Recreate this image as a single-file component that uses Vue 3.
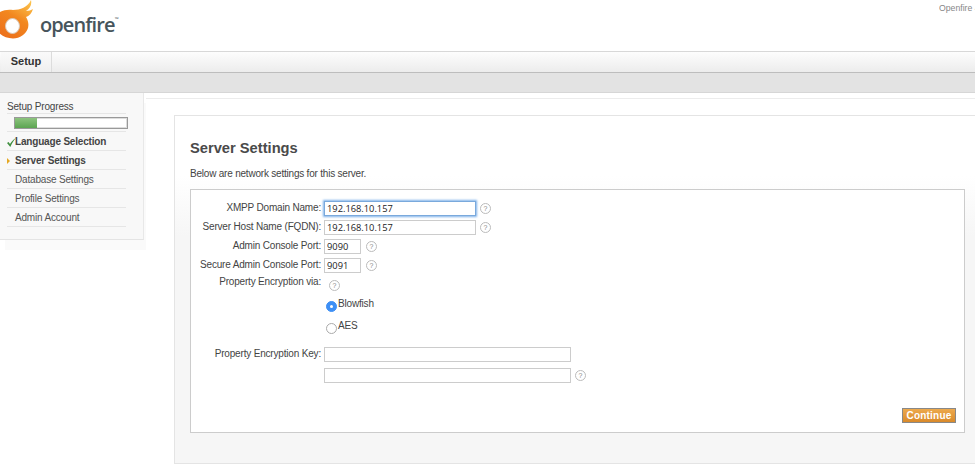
<template>
  <div class="page">
    <header class="top">
      <div class="logo">
        <svg class="mark" width="36" height="40" viewBox="0 0 36 40" aria-hidden="true">
          <defs>
            <linearGradient id="fl" x1="0.2" y1="1" x2="0.8" y2="0">
              <stop offset="0" stop-color="#ec6f1c" />
              <stop offset="0.55" stop-color="#f2871f" />
              <stop offset="1" stop-color="#fbc04a" />
            </linearGradient>
          </defs>
          <path fill="url(#fl)" d="M-3 14C2 10 8 9 13 10 20 10 28 7 31 0c1 5-1 8-5 11 3 0 5-1 7-2-1 4-4 7-7 8 2 3 3 7 2 11-2 6-8 10.500-15 10.500-8 0-15-4.500-17-10.500z" />
          <ellipse cx="12.500" cy="26" rx="7" ry="7.500" fill="#fff" stroke="#d9c8b8" stroke-width="1" />
        </svg>
        <span class="word">openfire<sup>™</sup></span>
      </div>
      <span class="brand-note">Openfire 4</span>
    </header>

    <nav class="tabs"><div class="tab">Setup</div></nav>
    <div class="subnav"></div>

    <div class="body">
      <aside class="side">
        <div class="side-title">Setup Progress</div>
        <div class="progress-row"><div class="progress"><div class="fill" :style="{ width: progress + '%' }"></div></div></div>
        <ul class="steps">
          <li v-for="s in steps" :key="s.label" :class="['step', s.state]">
            <svg v-if="s.state === 'done'" class="check" width="9" height="9" viewBox="0 0 9 9" aria-hidden="true"><path d="M0 5 1.600 4 3 6C4.500 3.500 6.300 1.500 8.800 0 6.600 2.500 4.800 5.500 3.300 9z" fill="#3f8f3f" /></svg>
            <span v-if="s.state === 'current'" class="arrow"></span>
            {{ s.label }}
          </li>
        </ul>
      </aside>

      <main class="main">
        <section class="panel">
          <h1>Server Settings</h1>
          <p class="intro">Below are network settings for this server.</p>
          <div class="card">
            <div class="form">
              <div v-for="f in fields" :key="f.label" class="row">
                <label>{{ f.label }}</label>
                <input :class="[f.size, { focus: f.focus }]" :value="f.value" readonly />
                <span class="help">?</span>
              </div>

              <div class="row enc">
                <label>Property Encryption via:</label>
                <span class="help">?</span>
              </div>
              <div class="radio-row first"><span class="radio on"></span><span class="radio-text">Blowfish</span></div>
              <div class="radio-row"><span class="radio"></span><span class="radio-text">AES</span></div>

              <div class="row key">
                <label>Property Encryption Key:</label>
                <input class="long" readonly />
              </div>
              <div class="row key2">
                <label></label>
                <input class="long" readonly />
                <span class="help">?</span>
              </div>
            </div>
            <div class="actions"><button class="continue">Continue</button></div>
          </div>
        </section>
      </main>
    </div>
  </div>
</template>

<script setup>
const progress = 20
const steps = [
  { label: 'Language Selection', state: 'done' },
  { label: 'Server Settings', state: 'current' },
  { label: 'Database Settings', state: '' },
  { label: 'Profile Settings', state: '' },
  { label: 'Admin Account', state: '' }
]
const fields = [
  { label: 'XMPP Domain Name:', value: '192.168.10.157', size: 'mid', focus: true },
  { label: 'Server Host Name (FQDN):', value: '192.168.10.157', size: 'mid' },
  { label: 'Admin Console Port:', value: '9090', size: 'port' },
  { label: 'Secure Admin Console Port:', value: '9091', size: 'port' }
]
</script>

<style>
html, body { margin: 0; background: #fff; overflow: hidden; }
</style>

<style scoped>
.page { width: 975px; height: 469px; overflow: hidden; font-family: "Liberation Sans", Arial, sans-serif; font-size: 10px; letter-spacing: -.18px; color: #444; }
.top { height: 51px; display: flex; justify-content: space-between; align-items: flex-start; }
.logo { display: flex; align-items: flex-start; }
.mark { display: block; }
.word { font-family: "Open Sans", sans-serif; font-weight: 600; font-size: 20px; line-height: 34px; margin: 8px 0 0 4px; color: #47555c; letter-spacing: -.9px; }
.word sup { font-size: 5px; vertical-align: 11px; line-height: 0; }
.brand-note { font-size: 8.700px; letter-spacing: 0; color: #888; margin-top: 3px; white-space: nowrap; width: 36px; overflow: hidden; }
.tabs { height: 20px; border-top: 1px solid #d8d8d8; border-bottom: 1px solid #bdbdbd; background: linear-gradient(#fdfdfd, #ececec); display: flex; padding-left: 1px; }
.tab { width: 51px; box-sizing: border-box; border-right: 1px solid #dcdcdc; text-align: center; font-weight: bold; font-size: 11px; letter-spacing: 0; color: #333; line-height: 19px; background: linear-gradient(#fafafa, #efefef); }
.subnav { height: 19px; background: #e3e3e3; border-bottom: 1px solid #d6d6d6; }
.body { display: flex; align-items: flex-start; }
.side { width: 144px; height: 147px; box-sizing: border-box; padding: 8px 17px 0 7px; background: #f8f8f8; border-bottom: 1px solid #e4e4e4; border-right: 1px solid #e8e8e8; box-shadow: 5px 10px 0 #fafafa; flex: none; }
.side-title { line-height: 12px; border-bottom: 1px solid #e6e6e6; color: #444; }
.progress-row { height: 18px; box-sizing: border-box; border-bottom: 1px solid #e6e6e6; padding: 3px 0 0 7px; }
.progress { width: 114px; height: 12px; box-sizing: border-box; border: 1px solid #999; background: #fff; box-shadow: inset 0 0 0 1px #ddd; }
.fill { height: 100%; background: linear-gradient(#8dc47f, #5ca552); }
.steps { list-style: none; margin: 0; padding: 0; }
.step { height: 19px; line-height: 20px; box-sizing: border-box; border-bottom: 1px solid #e6e6e6; padding-left: 8px; position: relative; color: #555; }
.step.done, .step.current { font-weight: bold; color: #444; }
.check { position: absolute; left: 0; top: 6px; }
.arrow { position: absolute; left: 0; top: 7px; border-left: 3px solid #e5a823; border-top: 3px solid transparent; border-bottom: 3px solid transparent; }
.main { flex: 1; margin-left: 2px; margin-top: 5px; position: relative; background: #fff; border-top: 1px solid #ececec; padding: 16px 0 0 28px; }
.panel { border: 1px solid #e4e4e4; border-right: 0; height: 349px; box-sizing: border-box; padding: 23px 10px 0 15px; background: linear-gradient(#fff 0, #fff 60px, #f6f6f6 120px); }
h1 { margin: 0; font-size: 14.700px; letter-spacing: 0; line-height: 18px; font-weight: bold; color: #4a4a4a; }
.intro { margin: 10px 0 0; line-height: 13px; letter-spacing: -.21px; color: #444; }
.card { margin-top: 9px; height: 244px; box-sizing: border-box; background: #fff; border: 1px solid #ccc; position: relative; padding-top: 9px; }
.row { display: flex; align-items: center; height: 19px; }
label { width: 130px; text-align: right; margin: 0 3px 3px 0; white-space: nowrap; flex: none; color: #444; }
input { box-sizing: border-box; height: 15px; border: 1px solid #ccc; background: #fff; padding: 0 2px; font: 9.300px "Open Sans", sans-serif; letter-spacing: 0; color: #222; outline: 0; margin: 0; }
input.mid { width: 152px; }
input.port { width: 37px; }
input.long { width: 247px; }
input.focus { border-color: #7aa9dc; box-shadow: 0 0 2px 1px #7fb2ea; }
.help { width: 11px; height: 11px; border: 1px solid #bbb; border-radius: 50%; box-sizing: border-box; margin-left: 4px; font-size: 7px; letter-spacing: 0; line-height: 9px; text-align: center; color: #888; flex: none; }
.row .port + .help { margin-left: 5px; }
.enc label { margin-bottom: 7px; }
.enc .help { margin: 1px 0 0 5px; }
.radio-row { display: flex; align-items: flex-start; margin-left: 135px; height: 22px; }
.radio-row.first { margin-top: 4px; }
.radio { width: 11px; height: 11px; margin-top: 3px; border-radius: 50%; box-sizing: border-box; border: 1px solid #aaa; background: #fff; position: relative; flex: none; }
.radio.on { background: #3d8ff5; border-color: #3d8ff5; }
.radio.on::after { content: ""; position: absolute; left: 3px; top: 3px; width: 3px; height: 3px; border-radius: 50%; background: #fff; }
.radio-text { margin-left: 1px; }
.key { margin-top: 3px; }
.key2 { margin-top: 2px; }
.actions { position: absolute; right: 8px; bottom: 9px; }
.continue { display: block; width: 54px; height: 15px; padding: 0; border: 1px solid #888; background: linear-gradient(#eda94d, #d98a2a); color: #fff; font: bold 10px "Liberation Sans", sans-serif; letter-spacing: .2px; }
</style>
